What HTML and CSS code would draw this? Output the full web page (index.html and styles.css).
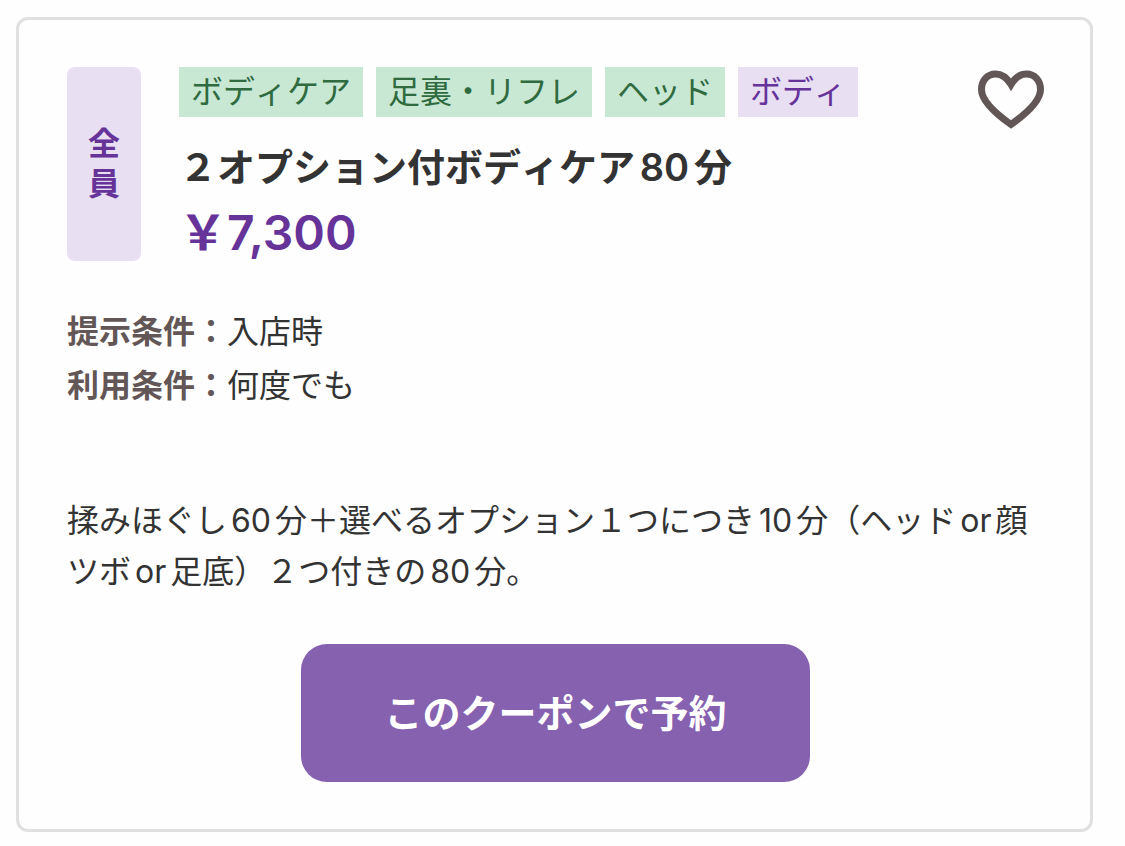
FILE: index.html
```
<!DOCTYPE html>
<html lang="ja">
<head>
    <meta charset="UTF-8">
    <meta name="viewport" content="width=device-width, initial-scale=1.0">
    <title>クーポン</title>
    <link rel="stylesheet" href="styles.css">
</head>
<body>
    <article class="coupon">
        <div class="coupon-header">
            <div class="target"><span class="target-text">全員</span></div>

            <div class="summary">
                <ul class="tags">
                    <li class="tag">ボディケア</li>
                    <li class="tag">足裏・リフレ</li>
                    <li class="tag">ヘッド</li>
                    <li class="tag tag-purple">ボディ</li>
                </ul>
                <h2 class="title">２オプション付ボディケア80分</h2>
                <p class="price">￥7,300</p>
            </div>

            <button class="favorite-button" type="button" aria-label="お気に入りに追加">
                <svg class="heart" viewBox="0 0 66 60" aria-hidden="true">
                    <path d="M33 54.500 C21 46 3.500 32.500 3.500 19.500 C3.500 10.500 9.500 4 17.500 4 C24 4 28.500 7 33 14.500 C37.500 7 42 4 48.500 4 C56.500 4 62.500 10.500 62.500 19.500 C62.500 32.500 45 46 33 54.500 Z"/>
                </svg>
            </button>
        </div>

        <dl class="conditions">
            <div class="condition">
                <dt>提示条件：</dt>
                <dd>入店時</dd>
            </div>
            <div class="condition">
                <dt>利用条件：</dt>
                <dd>何度でも</dd>
            </div>
        </dl>

        <p class="description">揉みほぐし60分＋選べるオプション１つにつき10分（ヘッドor顔ツボor足底）２つ付きの80分。</p>

        <button class="reserve-button" type="button">このクーポンで予約</button>
    </article>
</body>
</html>
```

FILE: styles.css
```
* {
    box-sizing: border-box;
}

body {
    margin: 0;
    padding: 17px 32px 12px 16px;
    background-color: #fefefe;
    color: #333;
    font-family: Inter, "Noto Sans CJK JP", sans-serif;
    font-size: 32px;
    font-kerning: none;
    text-autospace: normal;
}

.coupon {
    padding: 47px 46px 47px 48px;
    border: 3px solid #e0e0e0;
    border-radius: 12px;
}

.coupon-header {
    display: flex;
    gap: 38px;
}

/* 対象者ラベル（1文字ずつ縦に並べる） */
.target {
    display: flex;
    align-items: center;
    justify-content: center;
    width: 74px;
    background: #e8dff3;
    color: #663399;
    border-radius: 8px;
    font-weight: 600;
    line-height: 40px;
}

.target-text {
    width: 1em;
}

.summary {
    flex: 1;
}

.tags {
    display: flex;
    flex-wrap: wrap;
    gap: 13px;
    margin: 0;
    padding: 0;
    list-style: none;
}

.tag {
    padding: 0 12px;
    background: #c8e8d4;
    color: #2f6b3f;
    line-height: 50px;
}

.tag-purple {
    background: #e8dff3;
    color: #663399;
}

.title {
    margin: 22px 0 0;
    font-size: 38px;
    font-weight: 600;
    line-height: 56px;
}

.price {
    margin: 10px 0 0;
    color: #663399;
    font-size: 48px;
    font-weight: 600;
    font-kerning: normal;
    line-height: 56px;
}

.favorite-button {
    align-self: flex-start;
    padding: 3px 0 0;
    border: none;
    background: none;
    cursor: pointer;
}

.heart {
    display: block;
    width: 66px;
    height: 60px;
    fill: none;
    stroke: #635656;
    stroke-width: 7;
}

.conditions {
    margin: 44px 0 0;
}

.condition {
    display: flex;
    line-height: 54px;
}

.condition dt {
    color: #635656;
    font-weight: 600;
}

.condition dd {
    margin: 0;
}

.description {
    margin: 82px 0 0;
    line-height: 51px;
}

.reserve-button {
    display: block;
    margin: 47px auto 0;
    padding: 40px 83px;
    border: none;
    border-radius: 26px;
    background: #8561b0;
    color: white;
    font-family: inherit;
    font-size: 38px;
    font-weight: 600;
    line-height: 58px;
    cursor: pointer;
}
```
